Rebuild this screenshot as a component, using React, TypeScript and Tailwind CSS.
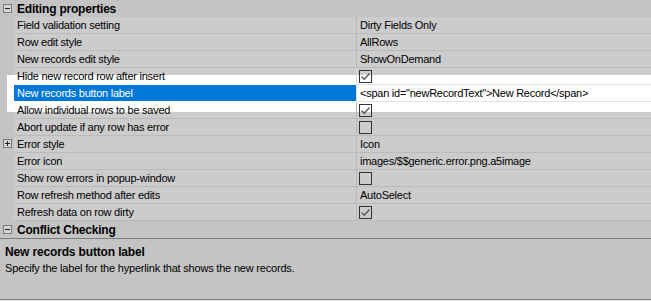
import React from "react";

type Row = {
  label: string;
  value?: string;
  check?: boolean;
  expand?: boolean;
  selected?: boolean;
  hl?: "top" | "full" | "bottom";
};

const rows: Row[] = [
  { label: "Field validation setting", value: "Dirty Fields Only" },
  { label: "Row edit style", value: "AllRows" },
  { label: "New records edit style", value: "ShowOnDemand" },
  { label: "Hide new record row after insert", check: true, hl: "top" },
  { label: "New records button label", value: '<span id="newRecordText">New Record</span>', selected: true, hl: "full" },
  { label: "Allow individual rows to be saved", check: true, hl: "bottom" },
  { label: "Abort update if any row has error", check: false },
  { label: "Error style", value: "Icon", expand: true },
  { label: "Error icon", value: "images/$$generic.error.png.a5image" },
  { label: "Show row errors in popup-window", check: false },
  { label: "Row refresh method after edits", value: "AutoSelect" },
  { label: "Refresh data on row dirty", check: true },
];

const Box = ({ plus }: { plus?: boolean }) => (
  <div className="relative w-[9px] h-[9px] border border-[#7a7a7a] bg-[#d6d6d6] flex items-center justify-center">
    <div className="w-[5px] h-[1px] bg-[#222]" />
    {plus && <div className="absolute w-[1px] h-[5px] bg-[#222]" />}
  </div>
);

const CheckBox = ({ on }: { on: boolean }) => (
  <div className="w-[13px] h-[13px] border border-[#333] flex items-center justify-center">
    {on && (
      <svg width="11" height="11" viewBox="0 0 11 11">
        <path d="M1.5 5.5 L4.2 8.2 L9.5 2.5" fill="none" stroke="#555" strokeWidth="1.3" />
      </svg>
    )}
  </div>
);

const Header = ({ title }: { title: string }) => (
  <div className="h-[17px] flex items-center bg-[#c4c4c4]">
    <div className="w-[14px] flex justify-center pl-[1px]">
      <Box />
    </div>
    <span className="pl-[3px] font-bold text-[12px] leading-[16px] tracking-[-0.2px] text-black">{title}</span>
  </div>
);

const gutterHl = {
  top: "bg-[linear-gradient(#c4c4c4_7px,#fff_7px)]",
  full: "bg-white",
  bottom: "bg-[linear-gradient(#fff_10px,#c4c4c4_10px)]",
};
const cellHl = {
  top: "bg-[linear-gradient(#cccccc_7px,#fff_7px)]",
  full: "bg-white",
  bottom: "bg-[linear-gradient(#fff_10px,#cccccc_10px)]",
};

const PropRow = ({ r }: { r: Row }) => {
  const labelBg = r.selected ? "bg-[#0078d7] text-white" : r.hl ? cellHl[r.hl] : "bg-[#cccccc]";
  const valueBg = r.hl ? cellHl[r.hl] : "bg-[#cccccc]";
  const labelBorder = r.hl === "top" || r.hl === "full" ? "border-b-white border-r-[#e2e2e2]" : "border-b-[#bababa] border-r-[#bababa]";
  const valueBorder = r.hl === "top" || r.hl === "full" ? "border-b-[#e2e2e2]" : "border-b-[#bababa]";
  return (
    <div className="h-[17px] flex">
      <div className="w-[14px] flex">
        <div className="w-[7px] bg-[#c4c4c4]" />
        <div className={`w-[7px] ${r.hl ? gutterHl[r.hl] : "bg-[#c4c4c4]"}`} />
      </div>
      {r.expand && (
        <div className="absolute left-[3px] mt-[3px]">
          <Box plus />
        </div>
      )}
      <div className={`w-[343px] border-b border-r pl-[3px] text-[11px] leading-[16px] tracking-[-0.25px] ${labelBg} ${labelBorder}`}>
        {r.label}
      </div>
      <div className={`flex-1 border-b flex items-center text-[11px] leading-[16px] tracking-[-0.25px] text-black ${valueBg} ${valueBorder} ${r.value ? "pl-[3px]" : "pl-[2px]"}`}>
        {r.value !== undefined ? r.value : <CheckBox on={!!r.check} />}
      </div>
    </div>
  );
};

export default function App() {
  return (
    <div className="w-[651px] h-[301px] bg-[#c4c4c4] overflow-hidden text-black" style={{ fontFamily: '"Liberation Sans", Arial, sans-serif' }}>
      <Header title="Editing properties" />
      <div className="relative">
        {rows.map((r) => (
          <PropRow key={r.label} r={r} />
        ))}
      </div>
      <Header title="Conflict Checking" />
      <div className="h-[62px] border-t border-t-[#7d7d7d] border-b border-b-[#808080] bg-[#c4c4c4] pl-[5px] pt-[6px]">
        <div className="font-bold text-[12px] leading-[15px] tracking-[-0.15px]">New records button label</div>
        <div className="text-[11px] leading-[15px] tracking-[-0.2px] mt-[1px]">Specify the label for the hyperlink that shows the new records.</div>
      </div>
      <div className="h-[1px] bg-[#e8e8e8]" />
    </div>
  );
}
